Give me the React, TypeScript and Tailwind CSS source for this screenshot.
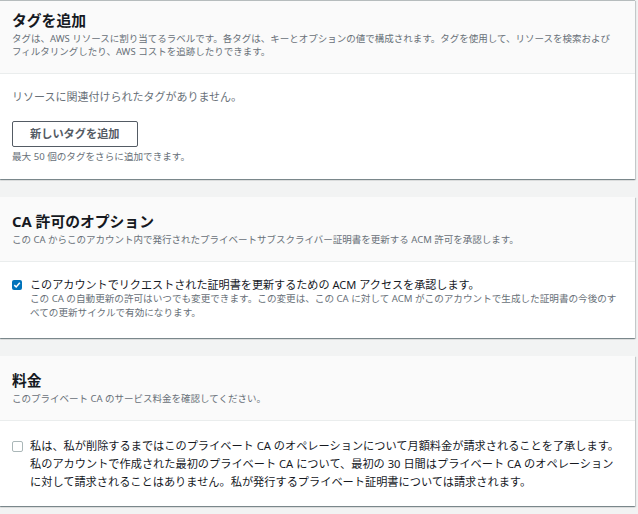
import React from "react";

const font = { fontFamily: '"Noto Sans", "Noto Sans CJK JP", sans-serif' };

function Card({ children, first }: { children: React.ReactNode; first?: boolean }) {
  return (
    <div
      className={`w-[635px] bg-white shadow-[0_1px_1px_0_rgba(0,28,36,0.3),1px_1px_1px_0_rgba(0,28,36,0.15),-1px_1px_1px_0_rgba(0,28,36,0.15)] ${first ? "border-t border-[#b6bcbd]" : ""}`}
    >
      {children}
    </div>
  );
}

function Header({ title, children, first }: { title: string; children: React.ReactNode; first?: boolean }) {
  return (
    <div className={`bg-[#fafafa] border-b border-[#eaeded] px-3 pb-[15px] ${first ? "pt-[10px]" : "pt-[15px]"}`}>
      <div className="text-[14.8px] leading-[18px] font-bold text-[#16191f]">{title}</div>
      <div className="mt-[3px] text-[9.5px] leading-[13px] text-[#687078]">{children}</div>
    </div>
  );
}

export default function App() {
  return (
    <div className="min-h-[514px] bg-[#f2f3f3] overflow-hidden" style={font}>
      <div className="flex flex-col gap-[18px]">
        <Card first>
          <Header title="タグを追加" first>
            タグは、AWS リソースに割り当てるラベルです。各タグは、キーとオプションの値で構成されます。タグを使用して、リソースを検索および
            <br />
            フィルタリングしたり、AWS コストを追跡したりできます。
          </Header>
          <div className="px-3 pt-[15px] pb-[16px]">
            <div className="text-[11px] leading-[16px] text-[#687078]">リソースに関連付けられたタグがありません。</div>
            <button className="mt-[16px] h-[26px] px-[17px] border border-[#545b64] rounded-[2px] bg-white text-[11.2px] font-bold text-[#545b64]">
              新しいタグを追加
            </button>
            <div className="mt-[3px] text-[9.6px] leading-[13px] text-[#687078]">最大 50 個のタグをさらに追加できます。</div>
          </div>
        </Card>

        <Card>
          <Header title="CA 許可のオプション">
            この CA からこのアカウント内で発行されたプライベートサブスクライバー証明書を更新する ACM 許可を承認します。
          </Header>
          <div className="px-3 pt-[15px] pb-[18px] flex gap-[8px]">
            <div className="mt-[2.5px] w-[10px] h-[10px] rounded-[2px] bg-[#0073bb] flex items-center justify-center shrink-0">
              <svg width="8" height="8" viewBox="0 0 8 8">
                <path d="M1.3 4.1 L3.2 6 L6.8 1.8" fill="none" stroke="white" strokeWidth="1.5" />
              </svg>
            </div>
            <div>
              <div className="text-[11.1px] leading-[15px] text-[#16191f]">
                このアカウントでリクエストされた証明書を更新するための ACM アクセスを承認します。
              </div>
              <div className="text-[9.6px] leading-[14px] text-[#687078]">
                この CA の自動更新の許可はいつでも変更できます。この変更は、この CA に対して ACM がこのアカウントで生成した証明書の今後のす
                <br />
                べての更新サイクルで有効になります。
              </div>
            </div>
          </div>
        </Card>

        <Card>
          <Header title="料金">このプライベート CA のサービス料金を確認してください。</Header>
          <div className="px-3 pt-[16px] pb-[15px] flex gap-[7px]">
            <div className="mt-[4px] w-[11px] h-[11px] rounded-[2px] border border-[#aab7b8] bg-white shrink-0" />
            <div className="text-[11.2px] leading-[18px] text-[#16191f]">
              私は、私が削除するまではこのプライベート CA のオペレーションについて月額料金が請求されることを了承します。
              <br />
              私のアカウントで作成された最初のプライベート CA について、最初の 30 日間はプライベート CA のオペレーション
              <br />
              に対して請求されることはありません。私が発行するプライベート証明書については請求されます。
            </div>
          </div>
        </Card>
      </div>
    </div>
  );
}
